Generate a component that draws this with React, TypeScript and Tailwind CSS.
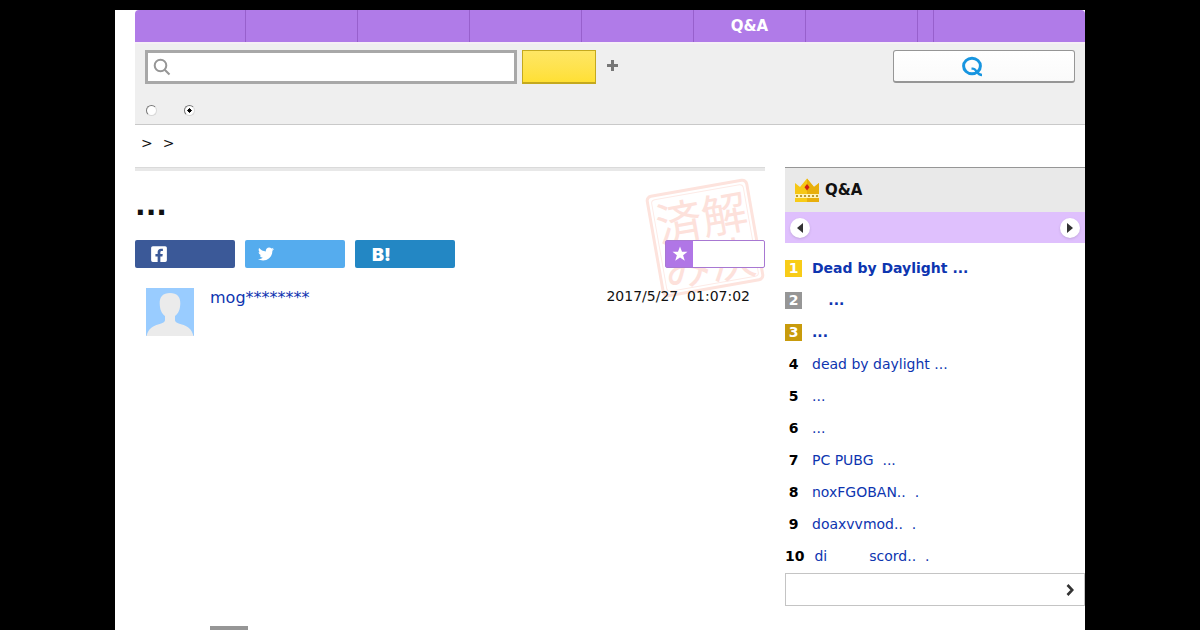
import React from "react";
import { FaFacebookSquare, FaTwitter } from "react-icons/fa";

const ranking = [
  { rank: 1, title: "Dead by Daylight ...", badge: "bg-[#f8cc18]" },
  { rank: 2, title: "\u2003\u2006...", badge: "bg-[#969696]" },
  { rank: 3, title: "...", badge: "bg-[#c89b0c]" },
  { rank: 4, title: "dead by daylight ..." },
  { rank: 5, title: "..." },
  { rank: 6, title: "..." },
  { rank: 7, title: "PC PUBG  ..." },
  { rank: 8, title: "noxFGOBAN..  ." },
  { rank: 9, title: "doaxvvmod..  ." },
  { rank: 10, title: "di\u2003\u2003\u2003scord..  ." },
];

/** Top navigation */
function NavBar() {
  const tabs = ["", "", "", "", "", "Q&A", ""];
  return (
    <nav className="flex h-8 rounded-t-sm bg-[#b07be8]">
      {tabs.map((tab, i) => (
        <a
          key={i}
          href="#"
          aria-label={tab || `Category ${i + 1}`}
          className={`flex items-center justify-center border-r border-[#9760cc] pt-px text-[15px] font-bold text-white ${
            i === 0 ? "w-[111px]" : "w-[112px]"
          }`}
        >
          {tab}
        </a>
      ))}
      <span className="w-4 border-r border-[#9760cc]" />
    </nav>
  );
}

/** Search box, scope radios and the ask button */
function SearchArea() {
  return (
    <form className="border-t-2 border-b border-t-[#f6eff6] border-b-[#c9c9c9] bg-[#efefef] px-[10px] pt-[6px] pb-2">
      <div className="flex items-start">
        <label className="flex h-[34px] w-[372px] items-center border-[3px] border-[#a8a8a8] bg-white pl-[5px]">
          <svg
            width="18"
            height="18"
            viewBox="0 0 18 18"
            fill="none"
            stroke="#969696"
            strokeWidth="2"
          >
            <circle cx="7.5" cy="7.5" r="5.8" />
            <path d="M11.7 11.7l4.8 4.8" />
          </svg>
          <input
            type="text"
            aria-label="Search"
            className="h-full min-w-0 flex-1 px-2 text-sm outline-none"
          />
        </label>
        <button
          type="button"
          aria-label="Search"
          className="ml-[5px] h-[34px] w-[74px] border border-b-2 border-[#c4a91e] bg-linear-to-b from-[#fee664] to-[#ffe033]"
        />
        <button
          type="button"
          aria-label="Search options"
          className="mt-[10px] ml-[11px]"
        >
          <svg width="11" height="11" viewBox="0 0 11 11" fill="#777">
            <path d="M4 0h3v4h4v3H7v4H4V7H0V4h4z" />
          </svg>
        </button>
        <button
          type="button"
          aria-label="Ask a question"
          className="ml-auto h-[33px] w-[182px] rounded-[3px] border border-b-2 border-[#969696] bg-linear-to-b from-white to-[#fafafa] pl-[68px]"
        >
          <svg
            width="21"
            height="21"
            viewBox="0 0 21 21"
            fill="none"
            stroke="#1795e0"
            strokeWidth="3"
          >
            <ellipse cx="10" cy="10" rx="8.4" ry="7.8" />
            <path
              d="M9.500 12.600h1.500c3.500 0 3.500 6.400 9 6.400"
              strokeWidth="2.400"
            />
          </svg>
        </button>
      </div>
      <div className="mt-[21px] flex gap-[27px] pl-[1px]">
        <input
          type="radio"
          name="scope"
          aria-label="Web"
          className="size-[11px] appearance-none rounded-full border border-[#d8d8d8] border-t-[#777] border-l-[#777] bg-white"
        />
        <input
          type="radio"
          name="scope"
          aria-label="Q&A"
          defaultChecked
          className="size-[11px] appearance-none rounded-full border border-[#d8d8d8] border-t-[#777] border-l-[#777] bg-white bg-radial from-black from-30% to-white to-35%"
        />
      </div>
    </form>
  );
}

/** Resolved stamp, laid over the heading area */
function Stamp() {
  return (
    <div
      lang="ja"
      className="absolute top-[18px] right-[8px] size-[104px] -rotate-10 rounded-md border-[3px] border-[#fde3dd] p-[2px]"
    >
      <div className="grid size-full grid-cols-2 place-items-center rounded-sm border border-[#fdebe7] font-['Noto_Sans_CJK_JP',sans-serif] text-[46px] leading-[46px] text-[#fde1db]">
        <span>済</span>
        <span>解</span>
        <span>み</span>
        <span>決</span>
      </div>
    </div>
  );
}

function Question() {
  return (
    <main className="relative min-w-0 flex-1 border-t border-[#dadada]">
      <div className="h-[3px] bg-[#e8e8e8]" />
      <Stamp />
      <h1 className="mt-[18px] text-[28px] leading-[34px] font-bold">...</h1>
      <div className="relative mt-[17px] flex gap-[10px]">
        <button
          type="button"
          aria-label="Facebook"
          className="flex h-7 w-[100px] items-center rounded-[2px] bg-[#3b5998] pl-[15px] text-white"
        >
          <FaFacebookSquare size={18} />
        </button>
        <button
          type="button"
          aria-label="Twitter"
          className="flex h-7 w-[100px] items-center rounded-[2px] bg-[#55acee] pl-[13px] text-white"
        >
          <FaTwitter size={16} />
        </button>
        <button
          type="button"
          aria-label="Bookmark"
          className="flex h-7 w-[100px] items-center rounded-[2px] bg-[#2387c4] pl-[17px] font-[Inter,sans-serif] text-[18px] font-black text-white"
        >
          B!
        </button>
        <button
          type="button"
          aria-label="Add to favourites"
          className="ml-auto flex h-7 w-[100px] rounded-[2px] border border-[#a878d2] bg-white"
        >
          <span className="flex h-full w-[27px] items-center justify-center bg-[#b076e6]">
            <svg width="16" height="16" viewBox="0 0 16 16" fill="#fff">
              <path d="M8 .5l2 5.300h5.500l-4.400 3.400 1.700 5.500L8 11.500l-4.800 3.200 1.700-5.500L.5 5.800H6z" />
            </svg>
          </span>
        </button>
      </div>

      {/* Asker */}
      <div className="relative mt-5 flex items-start pr-[15px] pl-[11px]">
        <svg width="48" height="48" viewBox="0 0 48 48">
          <path d="M0 0h48v48H0z" fill="#99ccff" />
          <path
            d="M24 5c7 0 10.500 4 10.300 10.500-.2 6-1.800 10-5.300 12.500v4c0 2 2 3 7 4.500 6.500 2 9.500 4.500 11.500 11.500H.5C2.500 41 5.500 38.500 12 36.500c5-1.500 7-2.500 7-4.500v-4c-3.500-2.500-5.100-6.500-5.300-12.500C13.500 9 17 5 24 5z"
            fill="#ebebeb"
          />
        </svg>
        <a href="#" className="ml-4 text-base leading-5 text-[#0d35b0]">
          mog********
        </a>
        <time className="ml-auto text-sm leading-4 whitespace-pre">
          2017/5/27  01:07:02
        </time>
      </div>
      <div className="mt-[290px] ml-[75px] h-1 w-[38px] bg-[#969696]" />
    </main>
  );
}

function Crown() {
  return (
    <svg width="24" height="24" viewBox="0 0 24 24">
      <path d="M0 5l5 4 7-8.500L19 9l5-4v11H0z" fill="#f6c714" />
      <path d="M12 .5L19 9l5-4v11H12z" fill="#e8af0c" />
      <path d="M0 16h24v4H0z" fill="#fff3b8" />
      <path d="M1 18h22" stroke="#b99a35" strokeWidth="2" strokeDasharray="2 2" />
      <path d="M0 20h12v4H0z" fill="#f8cc18" />
      <path d="M12 20h12v4H12z" fill="#e8af0c" />
      <path d="M12 6l2.500 3.200L12 12.500 9.500 9.200z" fill="#cf1d14" />
    </svg>
  );
}

/** Ranking column */
function Ranking() {
  return (
    <aside className="w-[300px] shrink-0 border-t border-[#969696]">
      <h2 className="flex h-11 items-center gap-[6px] bg-[#e9e9e9] pl-[10px] text-[15px] font-bold">
        <Crown />
        Q&A
      </h2>
      <div className="flex h-[31px] items-center justify-between bg-[#dfc0fd] px-[5px]">
        <button
          type="button"
          aria-label="Previous"
          className="flex size-5 items-center justify-center rounded-full bg-white shadow-sm"
        >
          <svg width="6" height="10" viewBox="0 0 6 10" fill="#333">
            <path d="M6 0v10L0 5z" />
          </svg>
        </button>
        <button
          type="button"
          aria-label="Next"
          className="flex size-5 items-center justify-center rounded-full bg-white shadow-sm"
        >
          <svg width="6" height="10" viewBox="0 0 6 10" fill="#333">
            <path d="M0 0v10l6-5z" />
          </svg>
        </button>
      </div>
      <ol className="mt-[9px] pb-px">
        {ranking.map((item) => (
          <li key={item.rank} className="flex h-8 items-center gap-[10px] text-sm">
            <span
              className={`min-w-[17px] text-center leading-[17px] font-bold ${
                item.badge ? `${item.badge} text-white` : "text-black"
              }`}
            >
              {item.rank}
            </span>
            <a
              href="#"
              className={`whitespace-pre text-[#0d35b0] ${item.badge ? "font-bold" : ""}`}
            >
              {item.title}
            </a>
          </li>
        ))}
      </ol>
      <a
        href="#"
        aria-label="See the full ranking"
        className="flex h-[33px] items-center justify-end border border-[#c4c4c4] pr-[10px]"
      >
        <svg
          width="8"
          height="12"
          viewBox="0 0 8 12"
          fill="none"
          stroke="#333"
          strokeWidth="2.600"
        >
          <path d="M1.500 1l4.800 5-4.800 5" />
        </svg>
      </a>
    </aside>
  );
}

export default function App() {
  return (
    <div className="flex min-h-screen flex-col bg-black pt-[10px] font-['DejaVu_Sans',sans-serif] text-[#111]">
      <div className="mx-auto w-full max-w-[970px] flex-1 bg-white pl-5">
        <NavBar />
        <SearchArea />
        <div className="flex h-[42px] gap-[10px] px-[6px] pt-2 text-sm">
          <span>&gt;</span>
          <span>&gt;</span>
        </div>
        <div className="flex gap-5">
          <Question />
          <Ranking />
        </div>
      </div>
    </div>
  );
}
